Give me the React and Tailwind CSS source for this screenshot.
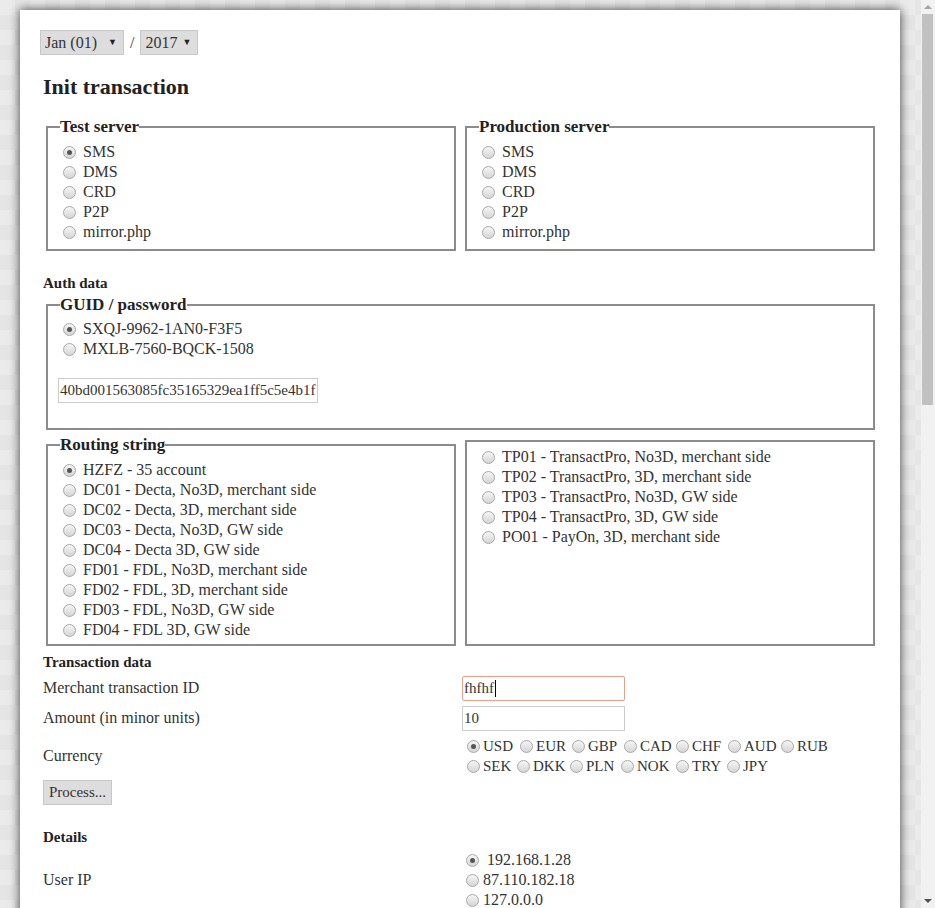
import React from "react";

const Radio = ({ checked }) => (
  <span className="flex h-[13px] w-[13px] shrink-0 items-center justify-center rounded-full border border-[#a8a8a8] bg-linear-to-b from-[#f6f6f6] to-[#d5d5d5]">
    {checked && <span className="h-[5px] w-[5px] rounded-full bg-[#555]" />}
  </span>
);

const Option = ({ label, checked }) => (
  <div className="flex h-[20px] items-center">
    <span className="ml-[3px] mr-[7px]">
      <Radio checked={checked} />
    </span>
    <span>{label}</span>
  </div>
);

const Box = ({ legend, className = "", children }) => (
  <fieldset className={`border-2 border-[#8c8c8c] px-[12px] pt-[5px] ${className}`}>
    {legend && (
      <legend className="text-[17px] font-bold leading-[20px] text-[#222]">{legend}</legend>
    )}
    {children}
  </fieldset>
);

const servers = ["SMS", "DMS", "CRD", "P2P", "mirror.php"];

const routesLeft = [
  "HZFZ - 35 account",
  "DC01 - Decta, No3D, merchant side",
  "DC02 - Decta, 3D, merchant side",
  "DC03 - Decta, No3D, GW side",
  "DC04 - Decta 3D, GW side",
  "FD01 - FDL, No3D, merchant side",
  "FD02 - FDL, 3D, merchant side",
  "FD03 - FDL, No3D, GW side",
  "FD04 - FDL 3D, GW side",
];

const routesRight = [
  "TP01 - TransactPro, No3D, merchant side",
  "TP02 - TransactPro, 3D, merchant side",
  "TP03 - TransactPro, No3D, GW side",
  "TP04 - TransactPro, 3D, GW side",
  "PO01 - PayOn, 3D, merchant side",
];

const currencies = [
  [
    ["USD", "w-[53px]"],
    ["EUR", "w-[52px]"],
    ["GBP", "w-[52px]"],
    ["CAD", "w-[52px]"],
    ["CHF", "w-[52px]"],
    ["AUD", "w-[53px]"],
    ["RUB", ""],
  ],
  [
    ["SEK", "w-[50px]"],
    ["DKK", "w-[53px]"],
    ["PLN", "w-[51px]"],
    ["NOK", "w-[55px]"],
    ["TRY", "w-[51px]"],
    ["JPY", ""],
  ],
];

const Select = ({ label, className }) => (
  <div
    className={`flex h-[25px] items-center justify-between border border-[#c8c8c8] bg-[#dddddd] pl-[4px] pr-[6px] ${className}`}
  >
    <span>{label}</span>
    <span className="text-[9px] text-[#222]">▼</span>
  </div>
);

export default function App() {
  return (
    <div className="flex h-[908px] overflow-hidden bg-[#ebebeb] bg-[linear-gradient(45deg,#e5e5e5_25%,transparent_25%,transparent_75%,#e5e5e5_75%),linear-gradient(45deg,#e5e5e5_25%,transparent_25%,transparent_75%,#e5e5e5_75%)] bg-[length:30px_30px] bg-[position:0_0,15px_15px] font-['Liberation_Serif',serif] text-[16px] text-[#333]">
      <div className="min-w-0 flex-1">
        <div className="ml-[20px] mt-[10px] w-[880px] bg-white px-[23px] pb-[40px] pt-[20px] shadow-[0_0_10px_rgba(0,0,0,0.75)]">
          <div className="flex items-center">
            <Select label="Jan (01)" className="ml-[-3px] w-[84px]" />
            <span className="mx-[6px]">/</span>
            <Select label="2017" className="w-[58px]" />
          </div>

          <h1 className="mt-[19px] text-[22px] font-bold leading-[26px] text-[#222]">
            Init transaction
          </h1>

          <div className="ml-[3px] mt-[17px] flex gap-[9px]">
            <Box legend="Test server" className="w-[410px] pb-[7px]">
              {servers.map((s, i) => (
                <Option key={s} label={s} checked={i === 0} />
              ))}
            </Box>
            <Box legend="Production server" className="w-[410px] pb-[7px]">
              {servers.map((s) => (
                <Option key={s} label={s} />
              ))}
            </Box>
          </div>

          <div className="mt-[22px] text-[15px] font-bold leading-[20px] text-[#222]">Auth data</div>

          <div className="ml-[3px] mt-[2px]">
            <Box legend="GUID / password" className="w-[829px] pb-[25px] !pt-[4px]">
              <Option label="SXQJ-9962-1AN0-F3F5" checked />
              <Option label="MXLB-7560-BQCK-1508" />
              <div className="ml-[-2px] mt-[19px] h-[25px] w-[260px] overflow-hidden whitespace-nowrap border border-[#cccccc] pl-[1px] text-[15px] leading-[23px]">
                40bd001563085fc35165329ea1ff5c5e4b1f
              </div>
            </Box>
          </div>

          <div className="ml-[3px] mt-[5px] flex items-end gap-[9px]">
            <Box legend="Routing string" className="w-[410px] pb-[4px]">
              {routesLeft.map((r, i) => (
                <Option key={r} label={r} checked={i === 0} />
              ))}
            </Box>
            <Box className="h-[206px] w-[410px]">
              {routesRight.map((r) => (
                <Option key={r} label={r} />
              ))}
            </Box>
          </div>

          <div className="mt-[6px] text-[15px] font-bold leading-[20px] text-[#222]">
            Transaction data
          </div>

          <div className="mt-[1px] grid grid-cols-[419px_1fr]">
            <div className="flex h-[30px] items-center">Merchant transaction ID</div>
            <div className="flex h-[30px] items-center">
              <div className="flex h-[25px] w-[163px] items-center rounded-[2px] border border-[#e8a088] pl-[1px] text-[15px]">
                fhfhf
                <span className="ml-[1px] h-[17px] w-[1px] bg-black" />
              </div>
            </div>

            <div className="flex h-[30px] items-center">Amount (in minor units)</div>
            <div className="flex h-[30px] items-center">
              <div className="flex h-[25px] w-[163px] items-center border border-[#cccccc] pl-[1px] text-[15px]">
                10
              </div>
            </div>

            <div className="flex h-[46px] items-center">Currency</div>
            <div className="flex h-[46px] flex-col justify-center pl-[5px] text-[15px]">
              {currencies.map((row, ri) => (
                <div key={ri} className="flex h-[20px] items-center">
                  {row.map(([c, w], i) => (
                    <div key={c} className={`flex items-center ${w}`}>
                      <Radio checked={ri === 0 && i === 0} />
                      <span className="ml-[3px]">{c}</span>
                    </div>
                  ))}
                </div>
              ))}
            </div>
          </div>

          <button className="mt-[1px] flex h-[25px] w-[69px] items-center justify-center border border-[#c8c8c8] bg-[#dddddd] text-[15px]">
            Process...
          </button>

          <div className="mt-[22px] text-[15px] font-bold leading-[20px] text-[#222]">Details</div>

          <div className="mt-[3px] grid grid-cols-[419px_1fr]">
            <div className="flex items-center">User IP</div>
            <div className="flex flex-col pl-[4px]">
              <div className="flex h-[20px] items-center">
                <Radio checked />
                <span className="ml-[8px]">192.168.1.28</span>
              </div>
              <div className="flex h-[20px] items-center">
                <Radio />
                <span className="ml-[4px]">87.110.182.18</span>
              </div>
              <div className="flex h-[20px] items-center">
                <Radio />
                <span className="ml-[4px]">127.0.0.0</span>
              </div>
            </div>
          </div>
        </div>
      </div>

      <div className="flex w-[14px] shrink-0 flex-col bg-[#f1f1f1]">
        <div className="flex h-[14px] items-center justify-center">
          <span className="h-0 w-0 border-x-[4px] border-b-[4px] border-x-transparent border-b-[#a3a3a3]" />
        </div>
        <div className="ml-[1px] mr-[2px] h-[391px] bg-[#c1c1c1]" />
        <div className="flex-1" />
        <div className="flex h-[14px] items-center justify-center">
          <span className="h-0 w-0 border-x-[4px] border-t-[4px] border-x-transparent border-t-[#505050]" />
        </div>
      </div>
    </div>
  );
}
